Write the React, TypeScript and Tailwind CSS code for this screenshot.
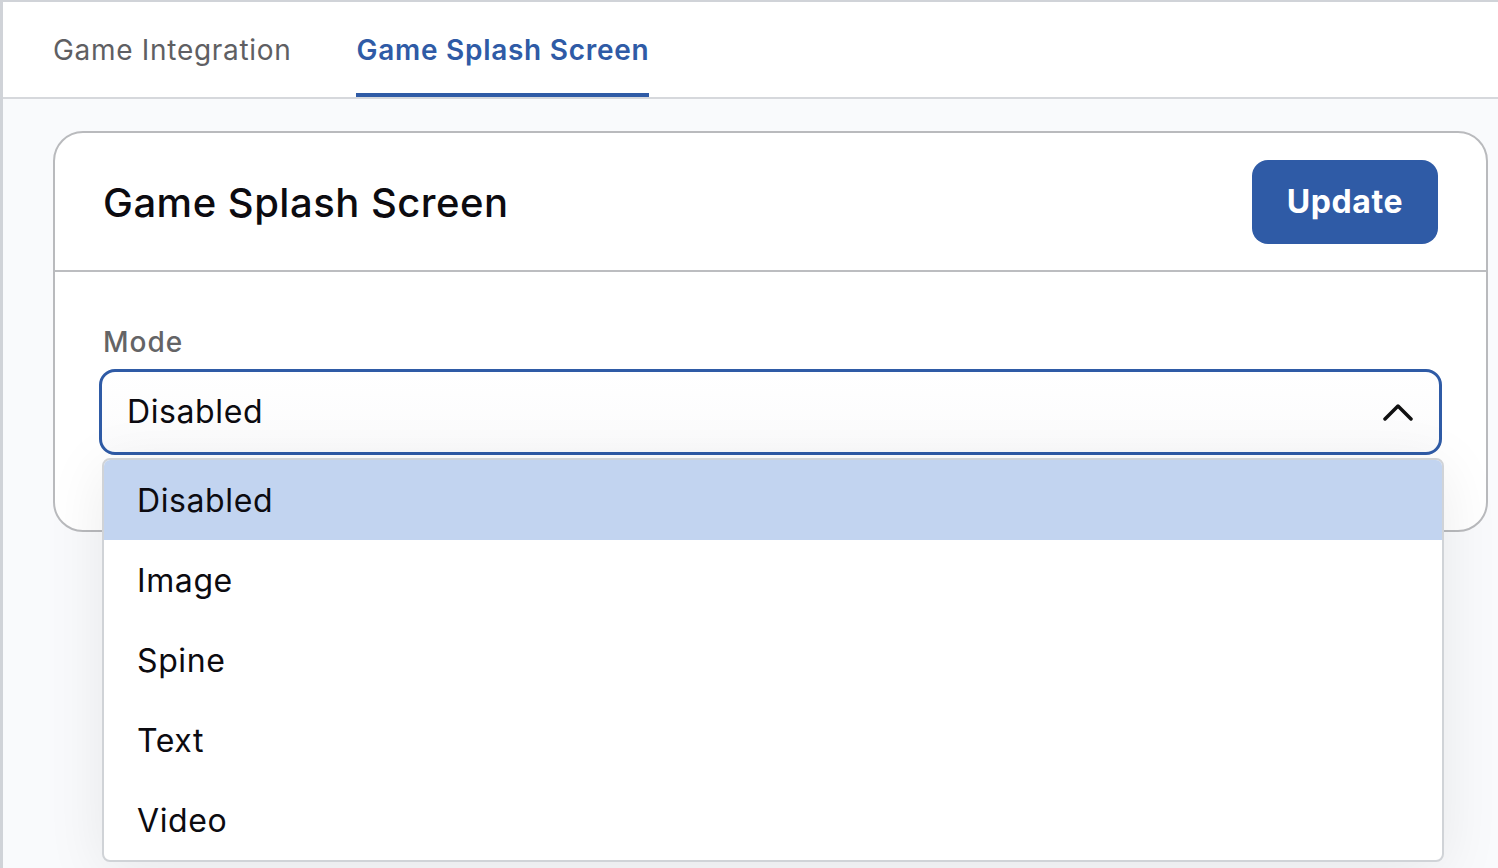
import React from "react";

function ChevronUp() {
  return (
    <svg width="30" height="18" viewBox="0 0 30 18" fill="none">
      <path d="M2 16 L15 3 L28 16" stroke="#111111" strokeWidth="3.5" strokeLinecap="round" strokeLinejoin="round" />
    </svg>
  );
}

export default function App() {
  const items = ["Disabled", "Image", "Spine", "Text", "Video"];
  return (
    <div
      className="w-[1498px] h-[868px] overflow-hidden bg-[#f9fafc] border-t-2 border-l-[3px] border-[#d0d3d8] flex flex-col"
      style={{ fontFamily: "Inter, 'Noto Sans', sans-serif" }}
    >
      <div className="h-[97px] shrink-0 bg-white border-b-2 border-[#d6d8dc] flex items-end pl-[50px] gap-[64px]">
        <div className="h-full flex items-center pt-[1px] text-[28px] tracking-[0.7px] text-[#5f5f63]">
          Game Integration
        </div>
        <div className="h-full flex flex-col justify-end">
          <div className="flex-1 flex items-center pt-[4px] pl-[1px] text-[28px] font-semibold tracking-[0.72px] text-[#2f5ba6]">
            Game Splash Screen
          </div>
          <div className="h-[4px] bg-[#2f5ba6]" />
        </div>
      </div>
      <div className="flex-1 relative pl-[50px] pr-[10px] pt-[32px]">
        <div className="w-[1435px] h-[401px] bg-white border-2 border-[#b9babd] rounded-[30px] flex flex-col">
          <div className="h-[139px] shrink-0 border-b-2 border-[#bcbdc0] flex items-center justify-between pl-[48px] pr-[48px]">
            <div className="text-[40px] font-medium tracking-[0.5px] text-[#0c0b10] pt-[2px]">Game Splash Screen</div>
            <button className="w-[186px] h-[84px] rounded-[16px] bg-[#2f5ba6] text-white text-[32px] font-bold tracking-[0.6px] flex items-center justify-center">
              Update
            </button>
          </div>
          <div className="pl-[44px] pr-[44px] pt-[53px]">
            <div className="pl-[4px] text-[28px] font-medium tracking-[1px] text-[#646466] leading-[34px]">Mode</div>
            <div className="mt-[10px] h-[86px] border-[3px] border-[#2f5ba6] rounded-[16px] flex items-center justify-between pl-[25px] pr-[26px] bg-gradient-to-b from-white to-[#fbfbfc]">
              <span className="text-[32px] tracking-[0.6px] text-[#0c0b10]">Disabled</span>
              <ChevronUp />
            </div>
          </div>
        </div>
        <div className="absolute left-[99px] top-[359px] w-[1342px] bg-white border-2 border-[#d0d3d7] rounded-[8px] shadow-[0_10px_60px_rgba(0,0,0,0.08)] overflow-hidden">
          {items.map((it, i) => (
            <div
              key={it}
              className={
                i === 0
                  ? "h-[80px] flex items-center pl-[33px] pt-[2px] text-[32px] tracking-[0.6px] text-[#0c0b10] bg-[#c2d4f0]"
                  : "h-[80px] flex items-center pl-[33px] pt-[2px] text-[32px] tracking-[0.6px] text-[#0c0b10]"
              }
            >
              {it}
            </div>
          ))}
        </div>
      </div>
    </div>
  );
}
